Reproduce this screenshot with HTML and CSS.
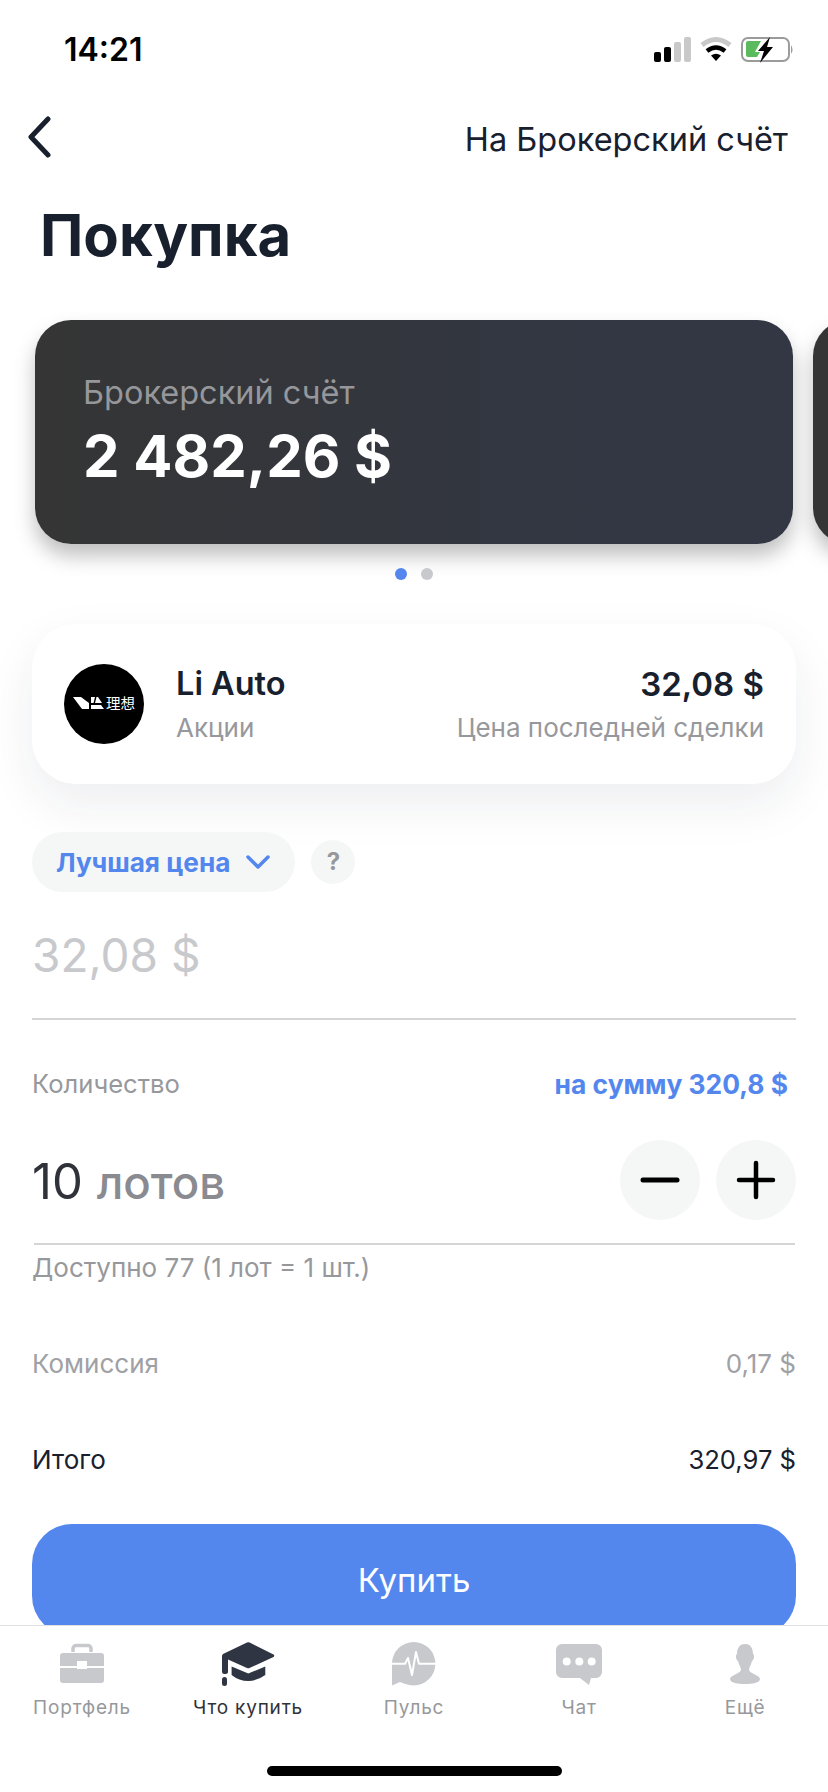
FILE: index.html
```html
<!DOCTYPE html>
<html lang="ru">
<head>
  <meta charset="UTF-8">
  <title>Покупка</title>
  <link rel="stylesheet" href="styles.css">
</head>
<body>
  <div class="screen">

    <!-- Status bar -->
    <div class="status-bar">
      <span class="status-time">14:21</span>
      <svg class="status-icons" width="142" height="28" viewBox="0 0 142 28">
        <rect x="0" y="16" width="7" height="10" rx="2" fill="#000"/>
        <rect x="10" y="11" width="7" height="15" rx="2" fill="#000"/>
        <rect x="20" y="6" width="7" height="20" rx="2" fill="#c9c9c9"/>
        <rect x="30" y="1" width="7" height="25" rx="2" fill="#c9c9c9"/>
        <path d="M48 9 Q 62 -2 76 9" fill="none" stroke="#c9c9c9" stroke-width="5"/>
        <path d="M53 15 Q 62 8 71 15" fill="none" stroke="#000" stroke-width="4.500"/>
        <path d="M57 19.500 Q 62 16 67 19.500 L62 25 Z" fill="#000"/>
        <rect x="88" y="2" width="47" height="23" rx="6" fill="none" stroke="#9b9b9b" stroke-width="2"/>
        <path d="M137 9 Q 140 13.500 137 18 Z" fill="#9b9b9b"/>
        <path d="M92 7 a2 2 0 0 1 2-2 h13 l-6 11 h5 l-3 5 h-9 a2 2 0 0 1-2-2 z" fill="#5cba5e"/>
        <path d="M116 1 L104 15 h6 l-4 12 L119 11 h-6 l3-10 z" fill="#000"/>
      </svg>
    </div>

    <div class="content">
      <!-- Top nav -->
      <div class="nav">
        <svg class="nav-back" width="24" height="42" viewBox="0 0 24 42">
          <path d="M21 3 L4 21 L21 39" fill="none" stroke="#18202e" stroke-width="5" stroke-linecap="round" stroke-linejoin="round"/>
        </svg>
        <span class="nav-link">На Брокерский счёт</span>
      </div>

      <h1 class="page-title">Покупка</h1>

      <!-- Accounts carousel -->
      <div class="carousel">
        <div class="account-card">
          <div class="account-name">Брокерский счёт</div>
          <div class="account-sum">2 482,26 $</div>
        </div>
        <div class="account-card account-card-next"></div>
      </div>
      <div class="dots">
        <span class="dot dot-active"></span>
        <span class="dot"></span>
      </div>

      <!-- Instrument -->
      <div class="stock-card">
        <svg class="stock-logo" width="80" height="80" viewBox="0 0 80 80">
          <circle cx="40" cy="40" r="40" fill="#000"/>
          <path d="M9 33 h8 l8 6 v6 h-7 z M27 33 h4 l-1.500 6 h-2.500 z M32.500 33 h1.500 l4 6 h-7 z M27 41 h10 l3 4 h-13 z" fill="#fff"/>
          <text class="stock-logo-text" x="42" y="45">理想</text>
        </svg>
        <div class="stock-info">
          <div class="stock-row">
            <span class="stock-name">Li Auto</span>
            <span class="stock-price">32,08 $</span>
          </div>
          <div class="stock-row">
            <span class="stock-sub">Акции</span>
            <span class="stock-sub">Цена последней сделки</span>
          </div>
        </div>
      </div>

      <!-- Order type -->
      <div class="order-type">
        <div class="pill">
          <span>Лучшая цена</span>
          <svg width="26" height="16" viewBox="0 0 26 16">
            <path d="M3 3 L13 13 L23 3" fill="none" stroke="#5487ee" stroke-width="3.500" stroke-linecap="round" stroke-linejoin="round"/>
          </svg>
        </div>
        <div class="help">?</div>
      </div>

      <div class="price-field">32,08 $</div>

      <!-- Quantity -->
      <div class="qty-head">
        <span class="muted">Количество</span>
        <span class="qty-sum">на сумму 320,8 $</span>
      </div>
      <div class="qty-row">
        <div class="qty-value">10 <span class="qty-unit">лотов</span></div>
        <div class="qty-buttons">
          <div class="round-btn">
            <svg width="40" height="40" viewBox="0 0 40 40"><path d="M3 20 H37" stroke="#000" stroke-width="5" stroke-linecap="round"/></svg>
          </div>
          <div class="round-btn">
            <svg width="40" height="40" viewBox="0 0 40 40"><path d="M3 20 H37 M20 3 V37" stroke="#000" stroke-width="4.500" stroke-linecap="round"/></svg>
          </div>
        </div>
      </div>
      <div class="qty-line"></div>
      <div class="qty-note muted">Доступно 77 (1 лот = 1 шт.)</div>

      <div class="line-row fee">
        <span>Комиссия</span>
        <span>0,17 $</span>
      </div>
      <div class="line-row total">
        <span>Итого</span>
        <span class="total-value">320,97 $</span>
      </div>

      <button class="buy-btn">Купить</button>
    </div>

    <!-- Bottom tabs -->
    <div class="tabbar">
      <div class="tabs">
        <div class="tab">
          <svg width="44" height="46" viewBox="0 0 44 46">
            <path d="M13 10 V6.500 a3 3 0 0 1 3-3 h12 a3 3 0 0 1 3 3 v3.500" fill="none" stroke="#c8c9cc" stroke-width="3.500"/>
            <path d="M3 11 h38 a3 3 0 0 1 3 3 v10 h-17 v-5 h-10 v5 h-17 v-10 a3 3 0 0 1 3-3 z" fill="#c8c9cc"/>
            <path d="M0 26 h17 v1 h10 v-1 h17 v12 a3 3 0 0 1-3 3 h-38 a3 3 0 0 1-3-3 z" fill="#c8c9cc"/>
          </svg>
          <span>Портфель</span>
        </div>
        <div class="tab tab-active">
          <svg width="53" height="46" viewBox="0 0 53 46">
            <path d="M25 0.500 Q26.300 0 27.600 0.500 L51.500 12.500 Q53 13.700 51.500 15 L27.500 26 Q26.300 26.500 25 26 L6 17.500 V30 Q6 32 2.400 32 Q0 32 0 30 V14 Q0 12.500 1.500 11.800 Z" fill="#2f3542"/>
            <path d="M9.600 24.500 L26.300 31.500 L43.300 24.500 V33 Q35 39 26.300 39 Q17 39 9.600 33 Z" fill="#2f3542"/>
            <rect x="0" y="35" width="5" height="9" rx="2.500" fill="#2f3542"/>
          </svg>
          <span>Что купить</span>
        </div>
        <div class="tab">
          <svg width="44" height="46" viewBox="0 0 44 46">
            <path d="M0 21.700 A21.700 21.700 0 1 1 21.700 43.400 Q16 43.400 8 40 L0 43.400 Z" fill="#c8c9cc"/>
            <path d="M0 21.700 H13 L16 16 L20 33 L24 10 L27 21.700 H44" fill="none" stroke="#fff" stroke-width="2" stroke-linejoin="round"/>
          </svg>
          <span>Пульс</span>
        </div>
        <div class="tab">
          <svg width="48" height="46" viewBox="0 0 48 46">
            <path d="M7 2 H41 a6 6 0 0 1 6 6 V30 a6 6 0 0 1-6 6 H36 L34 43 L25 36 H7 a6 6 0 0 1-6-6 V8 a6 6 0 0 1 6-6 Z" fill="#c8c9cc"/>
            <circle cx="11.700" cy="19.500" r="4" fill="#fff"/>
            <circle cx="24.300" cy="19.500" r="4" fill="#fff"/>
            <circle cx="36.700" cy="19.500" r="4" fill="#fff"/>
          </svg>
          <span>Чат</span>
        </div>
        <div class="tab">
          <svg width="30" height="46" viewBox="0 0 30 46">
            <path d="M15 2 C21 2 23 7 23 12 C25 13 24 18 22 19 C21 23 19 25 19 28 C20 32 30 33 30 37 C30 41 22 42 15 42 C8 42 0 41 0 37 C0 33 10 32 11 28 C11 25 9 23 8 19 C6 18 5 13 7 12 C7 7 9 2 15 2 Z" fill="#c8c9cc"/>
          </svg>
          <span>Ещё</span>
        </div>
      </div>
      <div class="home-indicator"></div>
    </div>

  </div>
</body>
</html>
```

FILE: styles.css
```css
* {
  box-sizing: border-box;
}

html,
body {
  margin: 0;
  padding: 0;
  height: 100%;
  background-color: #fff;
}

body {
  font-family: Inter, "Noto Sans", "Noto Sans CJK SC", sans-serif;
  color: #18202e;
}

.screen {
  width: 828px;
  height: 1792px;
  display: flex;
  flex-direction: column;
  overflow: hidden;
}

/* Status bar */
.status-bar {
  height: 100px;
  flex: none;
  display: flex;
  justify-content: space-between;
  align-items: flex-start;
  padding: 31px 32px 0 64px;
}

.status-time {
  font-size: 32px;
  line-height: 38px;
  font-weight: 600;
  color: #000;
}

.status-icons {
  margin-top: 5px;
}

/* Everything between status bar and tabs; the tabs cut the buy button */
.content {
  flex: 1;
  min-height: 0;
  overflow: hidden;
}

.nav {
  display: flex;
  justify-content: space-between;
  align-items: center;
  height: 74px;
  padding: 0 40px 0 27px;
}

.nav-link {
  font-size: 32.5px;
  line-height: 40px;
  padding-top: 6px;
}

.page-title {
  margin: 0;
  padding: 26px 0 0 40px;
  font-size: 58px;
  line-height: 70px;
  font-weight: 700;
}

.carousel {
  display: flex;
  gap: 20px;
  margin-top: 50px;
  padding-left: 35px;
}

.account-card {
  flex: none;
  width: 758px;
  height: 224px;
  padding: 53px 0 0 48px;
  border-radius: 36px;
  background: linear-gradient(90deg, #353535, #323743 75%);
  box-shadow: 0 12px 20px rgba(0, 0, 0, 0.25);
}

.account-card-next {
  padding: 0;
  background: #353535;
}

.account-name {
  font-size: 32.5px;
  line-height: 40px;
  color: #96979b;
}

.account-sum {
  margin-top: 9px;
  font-size: 58px;
  line-height: 68px;
  font-weight: 700;
  color: #fff;
}

.dots {
  display: flex;
  justify-content: center;
  gap: 14px;
  margin-top: 24px;
}

.dot {
  width: 12px;
  height: 12px;
  border-radius: 50%;
  background-color: #c8c9cc;
}

.dot-active {
  background-color: #5487ee;
}

.stock-card {
  display: flex;
  align-items: center;
  gap: 32px;
  height: 160px;
  margin: 44px 32px 0;
  padding: 0 32px;
  background-color: #fff;
  border-radius: 44px;
  box-shadow: 0 20px 50px rgba(30, 40, 60, 0.08);
}

.stock-logo {
  flex: none;
}

.stock-logo-text {
  font-family: "Noto Sans CJK SC", sans-serif;
  font-size: 14.5px;
  fill: #fff;
}

.stock-info {
  flex: 1;
}

.stock-row {
  display: flex;
  justify-content: space-between;
  align-items: center;
}

.stock-name {
  font-size: 32.5px;
  line-height: 44px;
  font-weight: 600;
}

.stock-price {
  font-size: 33px;
  line-height: 44px;
  font-weight: 600;
}

.stock-sub {
  margin-top: 4px;
  font-size: 26px;
  line-height: 36px;
  color: #97989c;
}

.order-type {
  display: flex;
  align-items: center;
  gap: 16px;
  margin: 48px 32px 0;
}

.pill {
  display: flex;
  align-items: center;
  gap: 15px;
  height: 60px;
  padding: 0 24px;
  border-radius: 30px;
  background-color: #f5f7f7;
  color: #5487ee;
  font-size: 26.2px;
  font-weight: 700;
}

.help {
  width: 44px;
  height: 44px;
  border-radius: 50%;
  background-color: #f5f7f7;
  color: #97989c;
  font-size: 24px;
  line-height: 44px;
  font-weight: 700;
  text-align: center;
}

.price-field {
  height: 128px;
  margin: 0 32px;
  padding-top: 34px;
  border-bottom: 2px solid #d4d5d7;
  font-size: 46px;
  line-height: 58px;
  color: #c8c9cc;
}

.muted {
  color: #97989c;
}

.qty-head {
  display: flex;
  justify-content: space-between;
  align-items: center;
  margin: 48px 40px 0 32px;
  font-size: 25.6px;
  line-height: 32px;
}

.qty-sum {
  color: #5487ee;
  font-size: 26.4px;
  font-weight: 700;
}

.qty-row {
  display: flex;
  justify-content: space-between;
  align-items: center;
  height: 80px;
  margin: 40px 32px 23px;
}

.qty-value {
  padding-top: 4px;
  font-size: 49px;
  line-height: 58px;
  font-weight: 400;
  color: #2f3238;
}

.qty-unit {
  font-size: 45.5px;
  font-weight: 500;
  color: #8a8b90;
}

.qty-buttons {
  display: flex;
  gap: 16px;
}

.round-btn {
  display: flex;
  justify-content: center;
  align-items: center;
  width: 80px;
  height: 80px;
  border-radius: 50%;
  background-color: #f5f7f7;
}

.qty-line {
  height: 2px;
  margin: 0 33px 0 34px;
  background-color: #d4d5d7;
}

.qty-note {
  margin: 7px 32px 0;
  font-size: 26px;
  line-height: 32px;
}

.line-row {
  display: flex;
  justify-content: space-between;
  margin: 0 32px;
  font-size: 26px;
  line-height: 32px;
}

.fee {
  margin-top: 64px;
  color: #a0a1a5;
}

.total {
  margin-top: 64px;
  color: #18202e;
}

.total-value {
  font-size: 25.6px;
}

.buy-btn {
  display: block;
  width: 764px;
  height: 112px;
  margin: 48px 32px 0;
  border: none;
  border-radius: 40px;
  background-color: #5487ee;
  color: #fff;
  font-family: inherit;
  font-size: 33px;
}

/* Tab bar */
.tabbar {
  flex: none;
  height: 167px;
  border-top: 1px solid #e0e0e2;
  background-color: #fff;
}

.tabs {
  display: grid;
  grid-template-columns: 164px 168px 164px 166px 166px;
  padding-top: 16px;
}

.tab {
  display: flex;
  flex-direction: column;
  align-items: center;
  gap: 8px;
  font-size: 19px;
  line-height: 24px;
  letter-spacing: 0.8px;
  color: #97989c;
}

.tab-active {
  color: #2f3238;
}

.home-indicator {
  width: 295px;
  height: 10px;
  margin: 46px 0 0 267px;
  border-radius: 5px;
  background-color: #000;
}
```
